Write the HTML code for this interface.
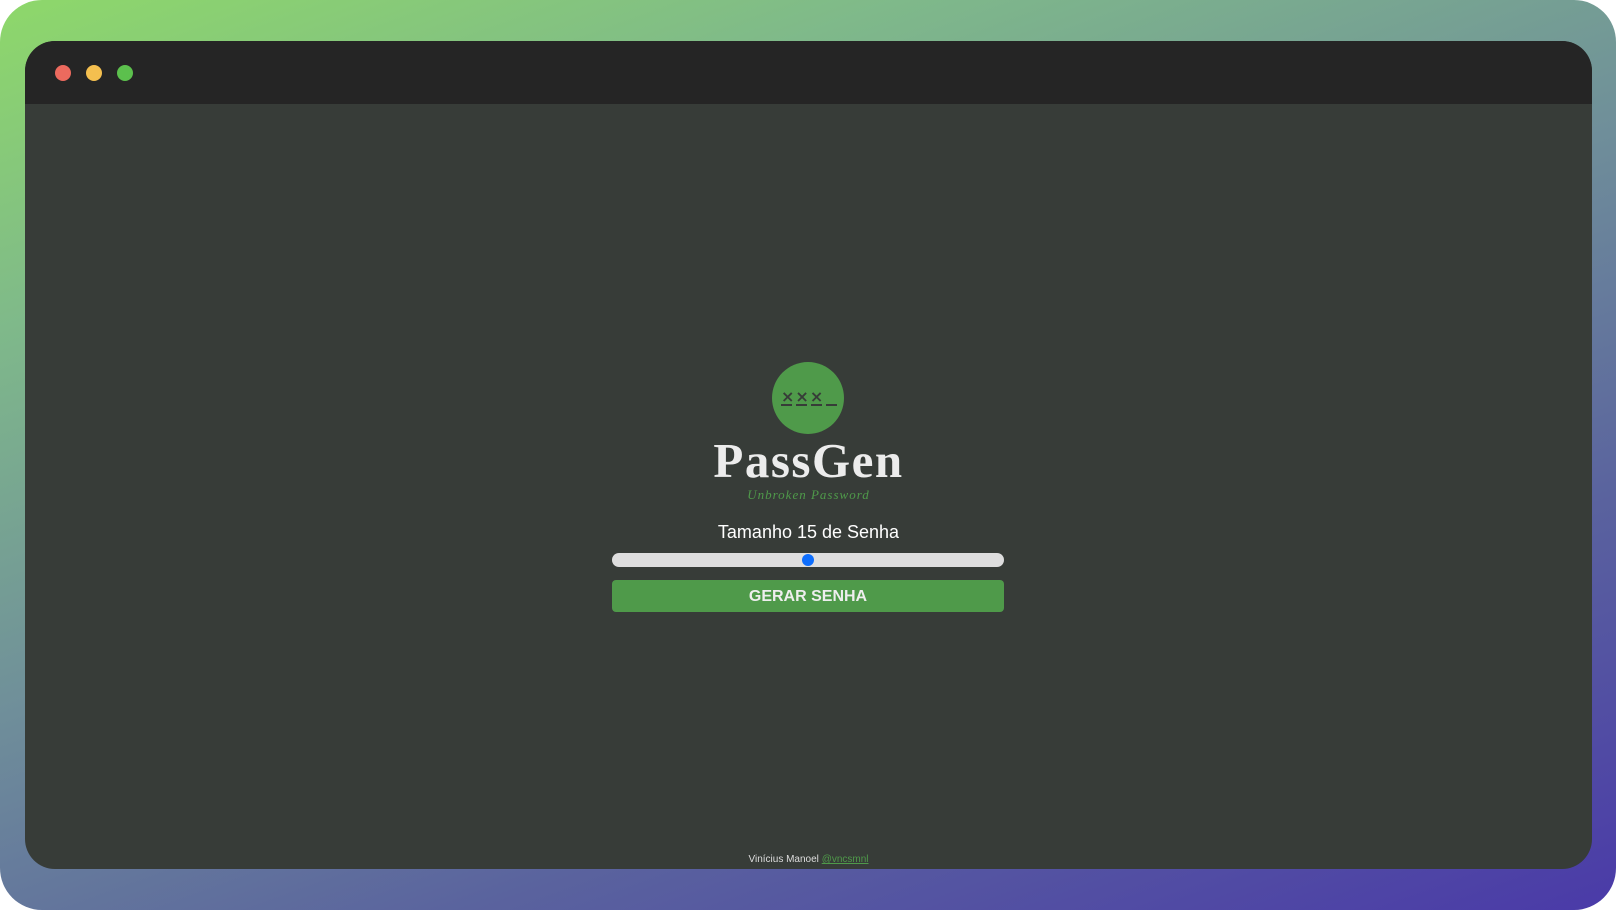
<!DOCTYPE html>
<html><head><meta charset="utf-8"><style>
html,body{margin:0;padding:0;width:1616px;height:910px;background:#fff;overflow:hidden}
.bg{position:absolute;left:0;top:0;width:1616px;height:910px;border-radius:42px;
background:linear-gradient(160deg,#8ed86a 0%,#7fb98a 22%,#6f8e9a 48%,#5a639e 72%,#4a3aa8 100%)}
.win{position:absolute;left:25px;top:41px;width:1567px;height:828px;border-radius:30px;background:#373c38;overflow:hidden}
.bar{height:63px;background:#252525;position:relative}
.dot{position:absolute;top:24px;width:16px;height:16px;border-radius:50%}
.c{position:absolute;left:0;right:0;text-align:center;font-family:"Liberation Sans",sans-serif}
</style></head><body>
<div class="bg"></div>
<div class="win">
<div class="bar">
<div class="dot" style="left:30px;background:#ec6a5e"></div>
<div class="dot" style="left:61px;background:#f4bf4f"></div>
<div class="dot" style="left:92px;background:#5cc04d"></div>
</div>
<div style="position:absolute;left:747px;top:321px;width:72px;height:72px;border-radius:50%;background:#4f9a4a"></div>
<div style="position:absolute;left:756px;top:346px;font-family:'DejaVu Sans',sans-serif;font-size:16px;font-weight:bold;color:#373c38;letter-spacing:1px">×××</div>
<div style="position:absolute;left:756px;top:363px;width:56px;height:2px;background:repeating-linear-gradient(90deg,#373c38 0 11px,transparent 11px 15px)"></div>
<div class="c" style="top:391px;font-family:'Liberation Serif',serif;font-weight:bold;font-size:49px;color:#ececec;letter-spacing:1.5px">PassGen</div>
<div class="c" style="top:446px;font-family:'Liberation Serif',serif;font-style:italic;font-size:13px;color:#4f9a4a;letter-spacing:1px">Unbroken Password</div>
<div class="c" style="top:481px;font-size:18px;color:#fff">Tamanho 15 de Senha</div>
<div style="position:absolute;left:587px;top:512px;width:392px;height:14px;border-radius:7px;background:#dedede"></div>
<div style="position:absolute;left:777px;top:513px;width:12px;height:12px;border-radius:50%;background:#0d6efd"></div>
<div style="position:absolute;left:587px;top:539px;width:392px;height:32px;border-radius:4px;background:#4f9a4a;color:#eee;font-family:'Liberation Sans',sans-serif;font-weight:bold;font-size:16px;line-height:33px;text-align:center">GERAR SENHA</div>
<div class="c" style="top:813px;font-size:10px;color:#ddd">Vinícius Manoel <span style="color:#4f9a4a;text-decoration:underline">@vncsmnl</span></div>
</div>
</body></html>
